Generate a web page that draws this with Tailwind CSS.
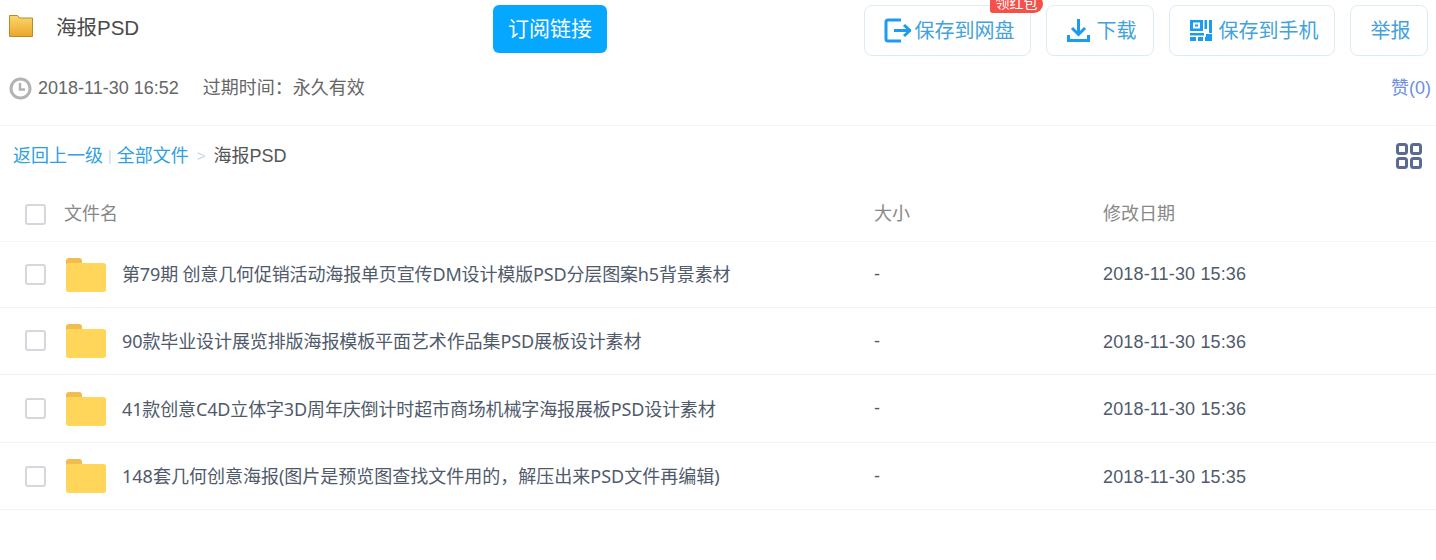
<!DOCTYPE html>
<html lang="zh-CN">
<head>
    <meta charset="UTF-8">
    <title>海报PSD</title>
    <script src="https://cdn.jsdelivr.net/npm/@tailwindcss/browser@4"></script>
</head>
<body class="bg-white h-[560px] overflow-hidden font-['Liberation_Sans','Noto_Sans_CJK_SC',sans-serif] text-[#505a6b]">
    <!-- Header -->
    <header class="h-[63px] flex relative">
        <div class="flex items-start pl-[9px] pt-[15px] w-[493px]">
            <svg class="w-[24px] h-[22px]" viewBox="0 0 24 22">
                <defs><linearGradient id="hf" x1="0" y1="0" x2="0" y2="1"><stop offset="0" stop-color="#fbd96c"/><stop offset="1" stop-color="#eba62a"/></linearGradient></defs>
                <path d="M.5.500h8l2 2.500h13v18.500H.5z" fill="url(#hf)" stroke="#b98a2a"/>
            </svg>
            <h1 class="ml-[23px] text-[20.5px] leading-[26px] text-[#4a4a4a]">海报PSD</h1>
        </div>
        <button class="mt-[5px] w-[114px] h-[48px] rounded-[6px] bg-[#06a7ff] text-white text-[21px]">订阅链接</button>
        <div class="absolute right-[8px] top-[5px] flex gap-[15px] text-[20px] text-[#43a2dc]">
            <button class="relative w-[167px] h-[51px] pl-[3px] rounded-[8px] border border-[#dcecf4] flex items-center justify-center">
                <span class="absolute right-[-13px] top-[-11px] w-[53px] h-[18px] rounded-bl-[3px] rounded-br-[10px] rounded-tr-[10px] bg-[#f5504a] text-white text-[14px] leading-[17px] text-center overflow-hidden">领红包</span>
                <svg class="w-[27px] h-[25px] mr-[4px]" viewBox="0 0 27 25" fill="none" stroke="#1b9cf0" stroke-width="3">
                    <path d="M17 2H4a2 2 0 0 0-2 2v17a2 2 0 0 0 2 2h13"/>
                    <path d="M10 12.500h14M20 7l6 5.500-6 5.500"/>
                </svg>
                <span>保存到网盘</span>
            </button>
            <button class="w-[108px] h-[51px] pl-[3px] rounded-[8px] border border-[#dcecf4] flex items-center justify-center">
                <svg class="w-[23px] h-[24px] mr-[7px]" viewBox="0 0 23 24" fill="none" stroke="#1b9cf0" stroke-width="3">
                    <path d="M11.500 0v15M5 9l6.500 6.500L18 9"/>
                    <path d="M1.500 16v5.500h20V16"/>
                </svg>
                <span>下载</span>
            </button>
            <button class="w-[166px] h-[51px] pl-[4px] rounded-[8px] border border-[#dcecf4] flex items-center justify-center">
                <svg class="w-[22px] h-[22px] mr-[7px]" viewBox="0 0 22 22" fill="#1b9cf0">
                    <path fill-rule="evenodd" d="M0 0h13v11H0zM3 2.500v6h7v-6z"/>
                    <path d="M5 4.500h3v2H5zM14.500 0H17v9h-2.500zM19 0h3v13h-3zM0 13h14v2.500H0zM0 17h6v4H0zM8 17h5v4H8zM15 17h1v-3h6v7h-7z"/>
                </svg>
                <span>保存到手机</span>
            </button>
            <button class="w-[78px] h-[51px] pl-[3px] rounded-[8px] border border-[#dcecf4] flex items-center justify-center">举报</button>
        </div>
    </header>

    <!-- Meta row -->
    <div class="h-[63px] flex items-start border-b border-[#f2f4f6] pl-[9px] pt-[13px] pr-[5px] text-[18px] leading-[24px] text-[#666]">
        <svg class="w-[23px] h-[23px] mt-[1px]" viewBox="0 0 23 23" fill="none" stroke="#b3b3b3" stroke-width="3">
            <circle cx="11.500" cy="11.500" r="9.500"/>
            <path d="M11 6v6.500h5" stroke-width="2.500"/>
        </svg>
        <span class="ml-[6px]">2018-11-30 16:52</span>
        <span class="ml-[24px]">过期时间：永久有效</span>
        <span class="ml-auto text-[#6f8fe0]">赞(0)</span>
    </div>

    <!-- Breadcrumb -->
    <div class="h-[57px] flex items-center pl-[13px] pr-[14px] text-[18px] text-[#30a0e0]">
        <a class="pt-[3px]">返回上一级</a>
        <span class="pt-[3px] mx-[5px] text-[#c5d9e6] text-[14px]">|</span>
        <a class="pt-[3px]">全部文件</a>
        <span class="pt-[3px] mx-[8px] text-[#c5d9e6] text-[15px]">&gt;</span>
        <span class="pt-[3px] text-[#555]">海报PSD</span>
        <svg class="ml-auto mt-[2px] w-[26px] h-[26px]" viewBox="0 0 26 26" fill="none" stroke="#5b6a90" stroke-width="3">
            <rect x="1.500" y="1.500" width="9" height="9" rx="2"/>
            <rect x="15.500" y="1.500" width="9" height="9" rx="2"/>
            <rect x="1.500" y="15.500" width="9" height="9" rx="2"/>
            <rect x="15.500" y="15.500" width="9" height="9" rx="2"/>
        </svg>
    </div>

    <!-- Table header -->
    <div class="h-[59px] pt-[5px] flex items-center border-b border-[#f4f5f7] text-[18px] text-[#888]">
        <span class="ml-[25px] w-[21px] h-[21px] rounded-[3px] border-2 border-[#d5d7dc]"></span>
        <span class="ml-[18px] w-[810px]">文件名</span>
        <span class="w-[229px]">大小</span>
        <span>修改日期</span>
    </div>

    <!-- Rows -->
    <div class="h-[66px] flex items-center border-b border-[#f1f2f4] text-[18px]">
        <span class="ml-[25px] w-[21px] h-[21px] rounded-[3px] border-2 border-[#d5d7dc]"></span>
        <svg class="ml-[20px] w-[40px] h-[34px]" viewBox="0 0 40 34"><path d="M0 3a3 3 0 0 1 3-3h10a3 3 0 0 1 3 3v3H0z" fill="#f2bd4e"/><rect y="5" width="40" height="29" rx="2.500" fill="#ffd659"/></svg>
        <span class="ml-[16px] w-[752px] tracking-[-0.15px] font-['Noto_Sans','Noto_Sans_CJK_SC',sans-serif]">第79期 创意几何促销活动海报单页宣传DM设计模版PSD分层图案h5背景素材</span>
        <span class="w-[229px]">-</span>
        <span class="tracking-[0.15px]">2018-11-30 15:36</span>
    </div>
    <div class="h-[67px] flex items-center border-b border-[#f1f2f4] text-[18px]">
        <span class="ml-[25px] -mt-[1px] w-[21px] h-[21px] rounded-[3px] border-2 border-[#d5d7dc]"></span>
        <svg class="ml-[20px] w-[40px] h-[34px]" viewBox="0 0 40 34"><path d="M0 3a3 3 0 0 1 3-3h10a3 3 0 0 1 3 3v3H0z" fill="#f2bd4e"/><rect y="5" width="40" height="29" rx="2.500" fill="#ffd659"/></svg>
        <span class="ml-[16px] w-[752px] mt-[1px] tracking-[-0.1px] font-['Noto_Sans','Noto_Sans_CJK_SC',sans-serif]">90款毕业设计展览排版海报模板平面艺术作品集PSD展板设计素材</span>
        <span class="w-[229px]">-</span>
        <span class="mt-[2px] tracking-[0.15px]">2018-11-30 15:36</span>
    </div>
    <div class="h-[68px] flex items-center border-b border-[#f1f2f4] text-[18px]">
        <span class="ml-[25px] w-[21px] h-[21px] rounded-[3px] border-2 border-[#d5d7dc]"></span>
        <svg class="ml-[20px] w-[40px] h-[34px]" viewBox="0 0 40 34"><path d="M0 3a3 3 0 0 1 3-3h10a3 3 0 0 1 3 3v3H0z" fill="#f2bd4e"/><rect y="5" width="40" height="29" rx="2.500" fill="#ffd659"/></svg>
        <span class="ml-[16px] w-[752px] mt-[1px] tracking-[-0.14px] font-['Noto_Sans','Noto_Sans_CJK_SC',sans-serif]">41款创意C4D立体字3D周年庆倒计时超市商场机械字海报展板PSD设计素材</span>
        <span class="w-[229px]">-</span>
        <span class="mt-[2px] tracking-[0.15px]">2018-11-30 15:36</span>
    </div>
    <div class="h-[67px] flex items-center border-b border-[#f1f2f4] text-[18px]">
        <span class="ml-[25px] w-[21px] h-[21px] rounded-[3px] border-2 border-[#d5d7dc]"></span>
        <svg class="ml-[20px] w-[40px] h-[34px]" viewBox="0 0 40 34"><path d="M0 3a3 3 0 0 1 3-3h10a3 3 0 0 1 3 3v3H0z" fill="#f2bd4e"/><rect y="5" width="40" height="29" rx="2.500" fill="#ffd659"/></svg>
        <span class="ml-[16px] w-[752px] mt-[1px] font-['Noto_Sans','Noto_Sans_CJK_SC',sans-serif]">148套几何创意海报(图片是预览图查找文件用的，解压出来PSD文件再编辑)</span>
        <span class="w-[229px]">-</span>
        <span class="mt-[2px] tracking-[0.15px]">2018-11-30 15:35</span>
    </div>
</body>
</html>
